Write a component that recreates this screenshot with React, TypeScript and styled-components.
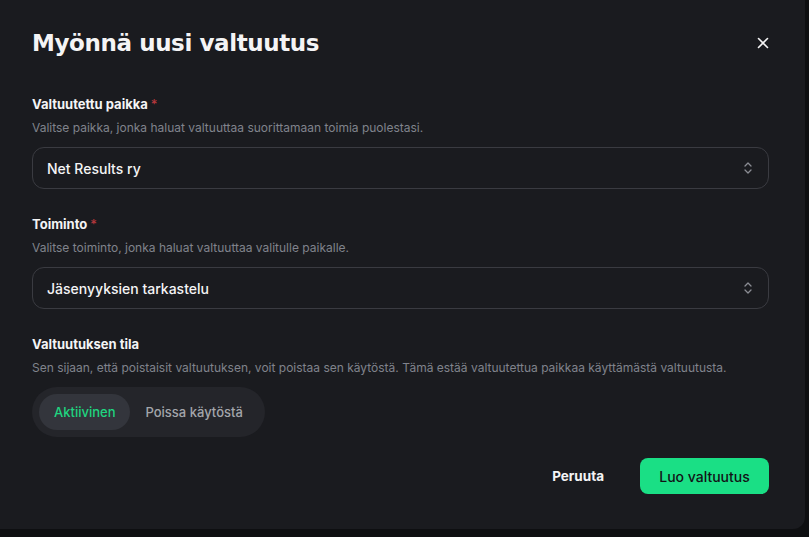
import React from "react";
import styled, { createGlobalStyle } from "styled-components";

const Global = createGlobalStyle`
  html, body { margin: 0; padding: 0; background: #0e0f11; }
  body { font-family: Inter, "Noto Sans", sans-serif; -webkit-font-smoothing: antialiased; }
  #root { width: 809px; height: 537px; overflow: hidden; }
`;

const Dialog = styled.div`
  width: 805px;
  height: 529px;
  box-sizing: border-box;
  background: #1a1b1f;
  border-bottom-right-radius: 12px;
  padding: 27px 36px 0 32px;
  display: flex;
  flex-direction: column;
`;

const Header = styled.div`
  display: flex;
  align-items: center;
  justify-content: space-between;
  height: 32px;
`;

const Title = styled.h1`
  margin: 0;
  font-family: "DejaVu Sans", sans-serif;
  font-weight: 700;
  font-size: 23px;
  letter-spacing: -0.4px;
  color: #f4f4f5;
`;

const Close = styled.button`
  background: none;
  border: 0;
  padding: 0;
  width: 16px;
  height: 16px;
  margin-right: -2px;
  color: #f4f4f5;
  display: flex;
  align-items: center;
  justify-content: center;
`;

const Field = styled.div<{ $top: number }>`
  margin-top: ${(p) => p.$top}px;
  display: flex;
  flex-direction: column;
`;

const Label = styled.div`
  font-size: 13px;
  font-weight: 700;
  color: #f4f4f5;
  line-height: 16px;
`;

const Req = styled.span`
  color: #b4373c;
  margin-left: 3px;
  font-weight: 500;
`;

const Desc = styled.div`
  margin-top: 8px;
  font-size: 12px;
  color: #80838c;
  line-height: 16px;
`;

const Select = styled.div`
  margin-top: 11px;
  height: 42px;
  box-sizing: border-box;
  border: 1px solid #3a3b41;
  border-radius: 12px;
  display: flex;
  align-items: center;
  justify-content: space-between;
  padding: 0 15px 0 14px;
  font-size: 14px;
  font-weight: 500;
  color: #f4f4f5;
`;

const Segmented = styled.div`
  margin-top: 11px;
  align-self: flex-start;
  height: 50px;
  box-sizing: border-box;
  padding: 7px;
  border-radius: 25px;
  background: #24252a;
  display: flex;
`;

const Seg = styled.div<{ $active?: boolean }>`
  height: 36px;
  border-radius: 18px;
  padding: 0 15px;
  display: flex;
  align-items: center;
  font-size: 13px;
  font-weight: 500;
  background: ${(p) => (p.$active ? "#33353c" : "transparent")};
  color: ${(p) => (p.$active ? "#1fd580" : "#a3a5ab")};
`;

const Footer = styled.div`
  margin-top: 21px;
  display: flex;
  justify-content: flex-end;
  align-items: center;
  gap: 36px;
`;

const Ghost = styled.button`
  background: none;
  border: 0;
  padding: 0;
  font-family: inherit;
  font-size: 13.5px;
  font-weight: 700;
  color: #f4f4f5;
`;

const Primary = styled.button`
  height: 36px;
  width: 129px;
  border: 0;
  border-radius: 8px;
  background: #1adf85;
  color: #121316;
  font-family: inherit;
  font-size: 14px;
  font-weight: 500;
`;

const Chevrons = () => (
  <svg width="10" height="14" viewBox="0 0 10 14" fill="none" stroke="#8a8c93" strokeWidth="1.3" strokeLinecap="round" strokeLinejoin="round">
    <path d="M2 5 L5 2 L8 5" />
    <path d="M2 9 L5 12 L8 9" />
  </svg>
);

export default function App() {
  return (
    <>
      <Global />
      <Dialog>
        <Header>
          <Title>Myönnä uusi valtuutus</Title>
          <Close aria-label="Sulje">
            <svg width="12" height="12" viewBox="0 0 12 12" stroke="currentColor" strokeWidth="1.6" strokeLinecap="round">
              <path d="M1.5 1.5 L10.5 10.5 M10.5 1.5 L1.5 10.5" />
            </svg>
          </Close>
        </Header>

        <Field $top={37}>
          <Label>Valtuutettu paikka<Req>*</Req></Label>
          <Desc>Valitse paikka, jonka haluat valtuuttaa suorittamaan toimia puolestasi.</Desc>
          <Select>
            <span>Net Results ry</span>
            <Chevrons />
          </Select>
        </Field>

        <Field $top={27}>
          <Label>Toiminto<Req>*</Req></Label>
          <Desc>Valitse toiminto, jonka haluat valtuuttaa valitulle paikalle.</Desc>
          <Select>
            <span>Jäsenyyksien tarkastelu</span>
            <Chevrons />
          </Select>
        </Field>

        <Field $top={27}>
          <Label>Valtuutuksen tila</Label>
          <Desc>Sen sijaan, että poistaisit valtuutuksen, voit poistaa sen käytöstä. Tämä estää valtuutettua paikkaa käyttämästä valtuutusta.</Desc>
          <Segmented>
            <Seg $active>Aktiivinen</Seg>
            <Seg>Poissa käytöstä</Seg>
          </Segmented>
        </Field>

        <Footer>
          <Ghost>Peruuta</Ghost>
          <Primary>Luo valtuutus</Primary>
        </Footer>
      </Dialog>
    </>
  );
}
